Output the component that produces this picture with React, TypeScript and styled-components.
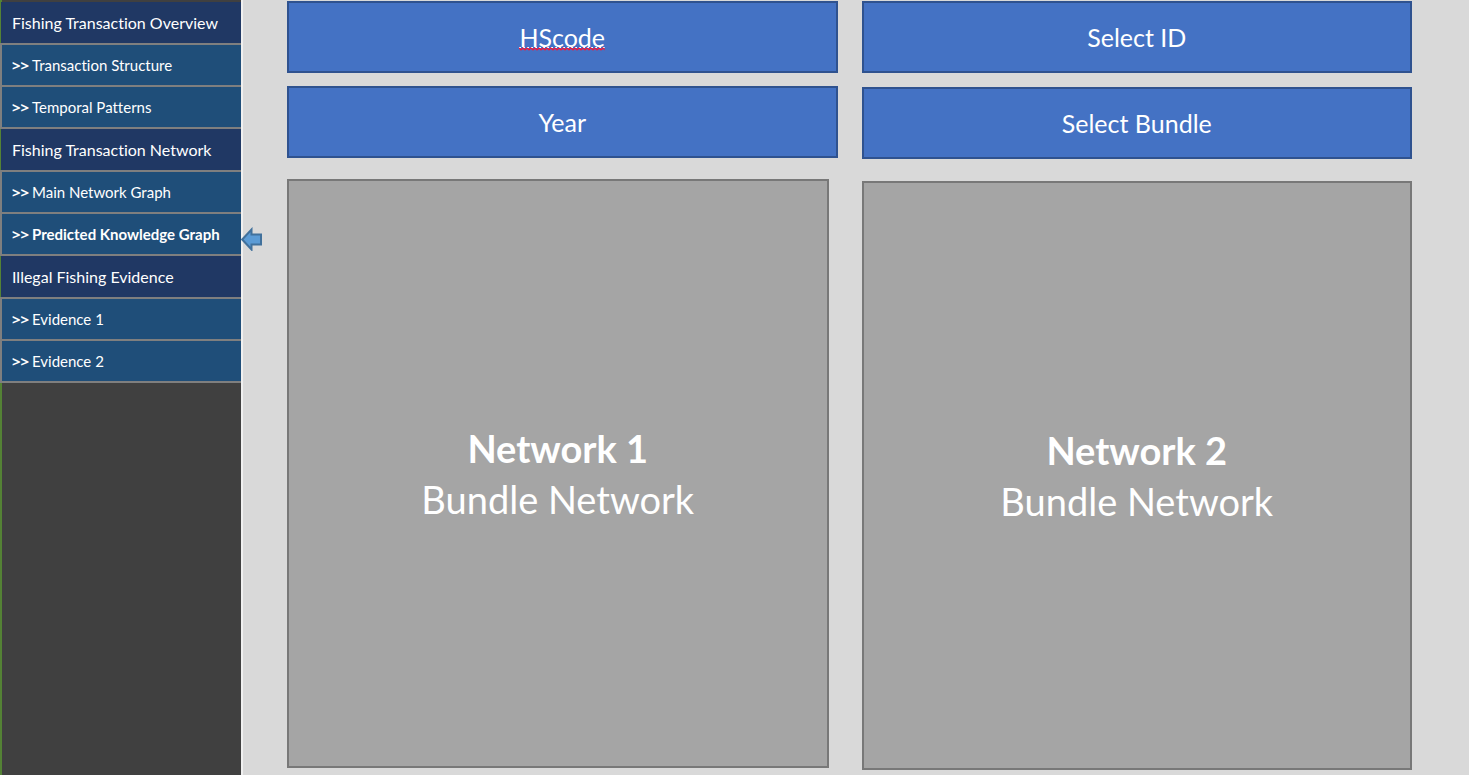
import React from "react";
import styled, { createGlobalStyle } from "styled-components";

const GlobalStyle = createGlobalStyle`
  *, *::before, *::after { box-sizing: border-box; }
  body {
    margin: 0;
    background: #d9d9d9;
    color: #fff;
    font-family: Lato, "Open Sans", sans-serif;
    font-variant-ligatures: none;
  }
`;

const Page = styled.div`
  display: flex;
  min-height: 100vh;
`;

const Sidebar = styled.nav`
  flex: none;
  width: 243px;
  padding-top: 2px;
  background: linear-gradient(to right, #548235 2px, #404040 2px);
  border-right: 2px solid #f0f0f0;
`;

const SectionTitle = styled.h2`
  display: flex;
  align-items: center;
  height: 41px;
  margin: 0 0 0 1px;
  padding-left: 11px;
  background: #203864;
  font-size: 16px;
  font-weight: 400;
  white-space: nowrap;
`;

const SectionLinks = styled.ul`
  margin: 0;
  padding: 0 0 2px 2px;
  list-style: none;
  background: #7f7f7f;
`;

const LinkItem = styled.li`
  position: relative;
  padding-top: 2px;
`;

const NavLink = styled.a<{ $active?: boolean }>`
  display: flex;
  align-items: center;
  height: 40px;
  padding-left: 10px;
  background: #1f4e79;
  color: #fff;
  font-size: 15px;
  font-weight: ${(p) => (p.$active ? 700 : 400)};
  text-decoration: none;
  white-space: nowrap;
`;

const Chevrons = styled.span`
  width: 20px;
  font-family: "Open Sans", sans-serif;
  font-size: 15px;
  line-height: 20px;
  font-weight: 700;
`;

const Pointer = styled.svg`
  position: absolute;
  top: 15px;
  left: 100%;
  width: 22px;
  height: 24px;
`;

const Main = styled.main`
  flex: 1;
  display: grid;
  grid-template-columns: 1fr 1fr;
  column-gap: 24px;
  padding: 1px 57px 5px 44px;
`;

const Column = styled.section<{ $gap: number }>`
  display: grid;
  grid-template-rows: auto auto 1fr;
  row-gap: ${(p) => p.$gap}px;
`;

const FilterButton = styled.button`
  height: 72px;
  padding: 0;
  border: 2px solid #2f528f;
  background: #4472c4;
  color: #fff;
  font-family: inherit;
  font-size: 25px;
  line-height: 28px;
`;

const Misspelled = styled.span`
  position: relative;
  display: inline-block;
`;

const Squiggle = styled.svg`
  position: absolute;
  left: 0;
  bottom: 0;
  width: 100%;
  height: 4px;
`;

const NetworkPanel = styled.article<{ $inset?: boolean }>`
  display: flex;
  flex-direction: column;
  align-items: center;
  justify-content: center;
  margin: ${(p) => (p.$inset ? "8px 9px 2px 0" : "8px 0 0")};
  border: 2px solid #787878;
  background: #a5a5a5;
  font-size: 38px;
  line-height: 51px;
`;

const PanelTitle = styled.h1`
  margin: 0;
  font-size: inherit;
  font-weight: 700;
`;

const PanelText = styled.p`
  margin: 0;
`;

const sections = [
  {
    title: "Fishing Transaction Overview",
    links: ["Transaction Structure", "Temporal Patterns"],
  },
  {
    title: "Fishing Transaction Network",
    links: ["Main Network Graph", "Predicted Knowledge Graph"],
  },
  { title: "Illegal Fishing Evidence", links: ["Evidence 1", "Evidence 2"] },
];

const current = "Predicted Knowledge Graph";

export default function App() {
  return (
    <>
      <GlobalStyle />
      <Page>
        <Sidebar>
          {sections.map((section) => (
            <React.Fragment key={section.title}>
              <SectionTitle>{section.title}</SectionTitle>
              <SectionLinks>
                {section.links.map((link) => (
                  <LinkItem key={link}>
                    <NavLink
                      href="#"
                      $active={link === current}
                      aria-current={link === current ? "page" : undefined}
                    >
                      <Chevrons>&gt;&gt;</Chevrons>
                      {link}
                    </NavLink>
                    {link === current && (
                      <Pointer viewBox="0 0 22 24" aria-hidden="true">
                        <path
                          d="M1.2 12.5 L10.5 2.5 V7.5 H20 V17.5 H10.5 V22.5 Z"
                          fill="#5b9bd5"
                          stroke="#41719c"
                          strokeWidth="2"
                        />
                      </Pointer>
                    )}
                  </LinkItem>
                ))}
              </SectionLinks>
            </React.Fragment>
          ))}
        </Sidebar>
        <Main>
          <Column $gap={13}>
            <FilterButton type="button">
              <Misspelled>
                HScode
                <Squiggle aria-hidden="true">
                  <defs>
                    <pattern id="wave" width="4" height="4" patternUnits="userSpaceOnUse">
                      <path d="M0 0.5 H4" stroke="#fff" strokeWidth="1" strokeDasharray="2 2" />
                      <path d="M0 1 L2 3 L4 1" fill="none" stroke="#ff1030" strokeWidth="1.2" />
                    </pattern>
                  </defs>
                  <rect width="100%" height="4" fill="url(#wave)" />
                </Squiggle>
              </Misspelled>
            </FilterButton>
            <FilterButton type="button">Year</FilterButton>
            <NetworkPanel $inset>
              <PanelTitle>Network 1</PanelTitle>
              <PanelText>Bundle Network</PanelText>
            </NetworkPanel>
          </Column>
          <Column $gap={14}>
            <FilterButton type="button">Select ID</FilterButton>
            <FilterButton type="button">Select Bundle</FilterButton>
            <NetworkPanel>
              <PanelTitle>Network 2</PanelTitle>
              <PanelText>Bundle Network</PanelText>
            </NetworkPanel>
          </Column>
        </Main>
      </Page>
    </>
  );
}
